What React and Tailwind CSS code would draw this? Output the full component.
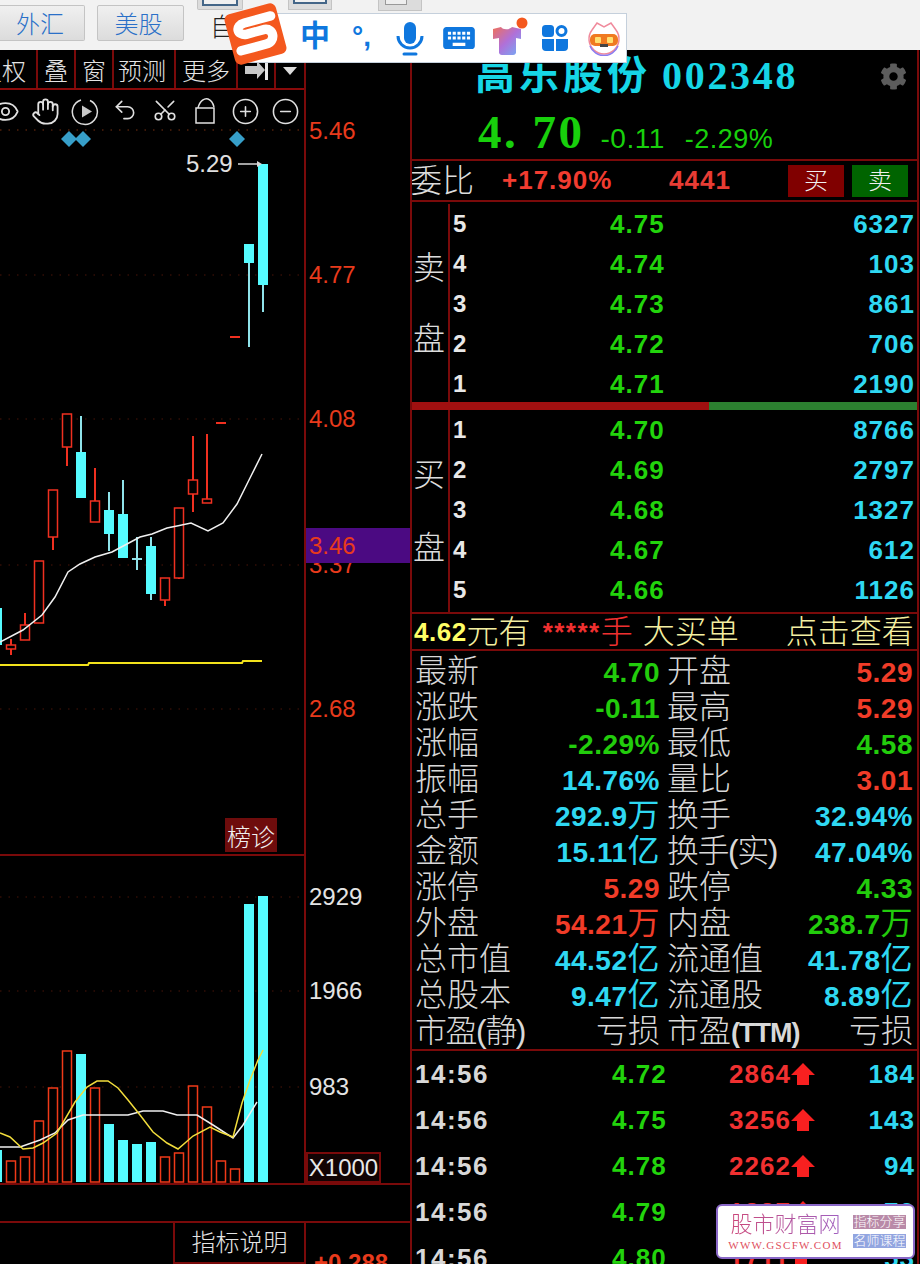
import { Eye, Hand, Undo2, Scissors, CirclePlus, CircleMinus } from 'lucide-react';
import { FaCog } from 'react-icons/fa';
import { MdKeyboard } from 'react-icons/md';

const sans = "font-['Liberation_Sans','Noto_Sans_CJK_SC',sans-serif]";

// x, bodyTop, bodyBottom, wickTop, wickBottom, up (red hollow) or down (cyan filled)
const candles = [
  [-3, 608, 645, 600, 650, false],
  [11, 645, 649, 639, 655, true],
  [25, 625, 640, 613, 640, true],
  [39, 561, 623, 561, 623, true],
  [53, 490, 537, 490, 550, true],
  [67, 414, 447, 414, 466, true],
  [81, 452, 498, 416, 498, false],
  [95, 501, 522, 468, 522, true],
  [109, 510, 534, 492, 551, false],
  [123, 514, 558, 480, 558, false],
  [137, 559, 560, 537, 570, false],
  [151, 546, 594, 537, 600, false],
  [165, 578, 600, 578, 606, true],
  [179, 508, 578, 508, 579, true],
  [193, 480, 494, 436, 512, true],
  [207, 499, 503, 434, 503, true],
  [221, 423, 424, 423, 424, true],
  [235, 337, 338, 337, 338, true],
  [249, 244, 263, 244, 347, false],
  [263, 164, 285, 164, 312, false],
];

const volumes = [
  [-3, 1150, false], [11, 1161, true], [25, 1157, true], [39, 1121, true], [53, 1088, true],
  [67, 1051, true], [81, 1054, false], [95, 1088, true], [109, 1124, false], [123, 1140, false],
  [137, 1144, false], [151, 1142, false], [165, 1157, true], [179, 1153, true], [193, 1086, true],
  [207, 1107, true], [221, 1161, true], [235, 1169, true], [249, 904, false], [263, 896, false],
];

const maLine = '0,642 23,630 42,615 55,597 68,572 80,564 95,557 112,552 127,544 140,537 152,534 167,528 177,526 191,523 208,531 223,523 237,504 250,478 262,454';
const volYellow = '0,1133 10,1137 23,1149 33,1148 43,1143 57,1133 75,1102 87,1087 97,1081 108,1081 118,1088 128,1100 140,1115 153,1132 167,1143 178,1149 193,1136 210,1127 220,1132 233,1137 242,1103 250,1080 258,1060 263,1050';
const volWhite = '0,1147 20,1147 40,1140 55,1133 68,1120 83,1115 128,1115 143,1111 163,1111 177,1115 197,1115 213,1125 233,1138 243,1125 257,1102';

function Chart() {
  return (
    <svg width="305" height="1093" viewBox="0 90 305 1093" className="block">
      {[130, 275, 419, 565, 709, 897, 991, 1087].map((y) => (
        <line key={y} x1="0" x2="305" y1={y} y2={y} stroke={y === 130 ? '#7a3010' : '#4a1508'} strokeWidth="1" strokeDasharray="1.5 7" />
      ))}
      <line x1="0" x2="305" y1="855" y2="855" stroke="#7a0a0a" strokeWidth="2" />
      {[69, 83, 237].map((x) => (
        <polygon key={x} points={`${x - 8},139 ${x},131 ${x + 8},139 ${x},147`} fill="#379fc9" />
      ))}
      {candles.map(([x, top, bottom, wickTop, wickBottom, up]) => {
        const wick = up ? '#f03020' : '#8fe3ea';
        if (bottom - top <= 1) {
          return (
            <g key={x}>
              <line x1={x - 5} x2={x + 5} y1={top} y2={top} stroke={wick} strokeWidth="2" />
              <line x1={x} x2={x} y1={wickTop} y2={wickBottom} stroke={wick} strokeWidth="2" />
            </g>
          );
        }
        return (
          <g key={x}>
            <line x1={x} x2={x} y1={wickTop} y2={wickBottom} stroke={wick} strokeWidth="2" />
            {up ? (
              <rect x={x - 4.5} y={top} width="9" height={bottom - top} fill="#000" stroke="#f03020" strokeWidth="1.5" />
            ) : (
              <rect x={x - 5} y={top} width="10" height={bottom - top} fill="#55fbff" />
            )}
          </g>
        );
      })}
      <polyline points={maLine} fill="none" stroke="#f0f0f0" strokeWidth="1.5" />
      <polyline points="0,665 88,665 89,663 242,663 243,661 262,661" fill="none" stroke="#f2e21c" strokeWidth="2" />
      <text x="186" y="172" fill="#e0e0e0" fontSize="24" fontFamily="Liberation Sans">5.29</text>
      <line x1="238" x2="258" y1="164" y2="164" stroke="#d8d8d8" strokeWidth="1.5" />
      <polygon points="257,161 262,164 257,167" fill="#d8d8d8" />
      {volumes.map(([x, top, up]) =>
        up ? (
          <rect key={x} x={x - 4.5} y={top} width="9" height={1182 - top} fill="#000" stroke="#f03a18" strokeWidth="1.5" />
        ) : (
          <rect key={x} x={x - 5} y={top} width="10" height={1182 - top} fill="#55fbff" />
        )
      )}
      <polyline points={volWhite} fill="none" stroke="#f0f0f0" strokeWidth="1.5" />
      <polyline points={volYellow} fill="none" stroke="#f2dd3c" strokeWidth="1.5" />
    </svg>
  );
}

function Tab({ width, children }) {
  return (
    <div className={`flex h-full items-center justify-center overflow-hidden whitespace-nowrap border-r-2 border-[#7a0a0a] pt-[5px] ${width}`}>
      {children}
    </div>
  );
}

function ToolIcon({ children }) {
  return <span className="flex w-10 flex-none justify-center">{children}</span>;
}

function LeftPanel() {
  const axisPrice = ['5.46', '4.77', '4.08', '3.37', '2.68'];
  return (
    <div className="flex w-[412px] flex-none flex-col border-r-2 border-[#7a0a0a]">
      <div className="flex">
        <div className="w-[306px] flex-none border-r-2 border-[#7a0a0a]">
          <div className="flex h-[40px] items-stretch border-b-2 border-[#8a0a0a] text-[24px] text-[#e4e4e4]">
            <Tab width="w-[38px] justify-end pr-[10px]">复权</Tab>
            <Tab width="w-[38px]">叠</Tab>
            <Tab width="w-[38px]">窗</Tab>
            <Tab width="w-[62px] pr-[4px]">预测</Tab>
            <Tab width="w-[62px]">更多</Tab>
            <Tab width="w-[38px]">
              <svg width="26" height="24" viewBox="0 0 26 24"><path d="M2 6h12V1l8 9-8 9v-5H2z" fill="#c8c8c8" /><rect x="22" y="2" width="3" height="18" fill="#e8e8e8" /></svg>
            </Tab>
            <div className="flex flex-1 items-center justify-center pt-[4px]">
              <svg width="16" height="10" viewBox="0 0 16 10"><path d="M1 1h14L8 9z" fill="#dcdcdc" /></svg>
            </div>
          </div>
          <div className="relative">
            <div className="absolute left-0 top-0 flex h-[42px] w-[304px] items-center overflow-hidden text-[#e0e0e0]">
              <div className="-ml-[15px] flex flex-none">
                <ToolIcon><Eye size={29} strokeWidth={1.5} /></ToolIcon>
                <ToolIcon><Hand size={29} strokeWidth={1.5} /></ToolIcon>
                <ToolIcon>
                  <svg width="29" height="29" viewBox="0 0 29 29" fill="none" stroke="#dcdcdc" strokeWidth="1.5"><path d="M19 3.5A12.5 12.5 0 1 1 10 3" /><path d="M11 8.5v12l10-6z" fill="#c8c8c8" stroke="none" /></svg>
                </ToolIcon>
                <ToolIcon><Undo2 size={26} strokeWidth={1.5} /></ToolIcon>
                <ToolIcon><Scissors size={26} strokeWidth={1.5} className="-rotate-90" /></ToolIcon>
                <ToolIcon>
                  <svg width="24" height="28" viewBox="0 0 24 28" fill="none" stroke="#e0e0e0" strokeWidth="1.5"><rect x="3" y="11" width="18" height="15" /><path d="M5 11C7 3 12 1 15 2c3 1 5 4 6 8" /></svg>
                </ToolIcon>
                <ToolIcon><CirclePlus size={29} strokeWidth={1.3} /></ToolIcon>
                <ToolIcon><CircleMinus size={29} strokeWidth={1.3} /></ToolIcon>
              </div>
            </div>
            <Chart />
            <div className="absolute left-[225px] top-[728px] flex h-[34px] w-[52px] items-end justify-center bg-[#6e0c0c] pb-[1px] text-[24px] leading-[26px] text-[#f0f0f0]">榜诊</div>
          </div>
        </div>
        <div className="relative flex-1">
          <div className="flex flex-col pl-[3px] pt-[69px] text-[24px] leading-6 text-[#e83a1c]">
            {axisPrice.map((v, i) => (
              <div key={v} className={i === 2 ? 'h-[146px]' : 'h-[144px]'}>{v}</div>
            ))}
          </div>
          <div className="absolute left-0 top-[478px] flex h-[35px] w-full items-center bg-[#4b0a82] pl-[3px] text-[24px] text-[#e83a1c]">3.46</div>
          <div className="absolute left-[3px] top-[835px] flex flex-col text-[24px] leading-6 text-[#e4e4e4]">
            <div className="h-[94px]">2929</div>
            <div className="h-[96px]">1966</div>
            <div>983</div>
          </div>
          <div className="absolute bottom-0 left-0 flex h-[31px] w-[75px] items-center justify-center border-2 border-[#7a0a0a] bg-[#120404] text-[24px] text-[#e8e8e8]">X1000</div>
        </div>
      </div>
      <div className="h-[40px] border-y-2 border-[#7a0a0a]" />
      <div className="flex h-[41px]">
        <div className="w-[173px] flex-none" />
        <div className="flex w-[133px] flex-none items-center justify-center border-x-2 border-b-2 border-[#7a0a0a] text-[24px] text-[#e4e4e4]">指标说明</div>
        <div className="flex-1 overflow-hidden pl-[8px] pt-[28px] text-[24px] font-bold leading-6 text-[#e83a1c]">+0.288</div>
      </div>
    </div>
  );
}

function OrderRows({ label, rows, box }) {
  return (
    <div className={`flex ${box}`}>
      <div className="flex w-[38px] flex-none flex-col items-center justify-around border-r-2 border-[#7a0a0a] py-[28px] pr-[2px] text-[32px] leading-none text-[#dcdcdc]">
        <span>{label[0]}</span>
        <span>{label[1]}</span>
      </div>
      <div className="flex-1 font-bold">
        {rows.map(([n, price, vol]) => (
          <div key={n} className="flex h-10 items-center text-[26px] tracking-[1px]">
            <span className="w-[42px] flex-none pl-[3px] text-[24px] text-[#e8e8e8]">{n}</span>
            <span className="w-[118px] flex-none pl-[118px] text-[#22d40c]">{price}</span>
            <span className="flex-1 pr-[2px] text-right text-[#2fd8f2]">{vol}</span>
          </div>
        ))}
      </div>
    </div>
  );
}

const stats = [
  ['最新', '4.70', '#22cc0c', '开盘', '5.29', '#f03c28'],
  ['涨跌', '-0.11', '#22cc0c', '最高', '5.29', '#f03c28'],
  ['涨幅', '-2.29%', '#22cc0c', '最低', '4.58', '#22cc0c'],
  ['振幅', '14.76%', '#2fd8f2', '量比', '3.01', '#f03c28'],
  ['总手', '292.9万', '#2fd8f2', '换手', '32.94%', '#2fd8f2'],
  ['金额', '15.11亿', '#2fd8f2', '换手(实)', '47.04%', '#2fd8f2'],
  ['涨停', '5.29', '#f03c28', '跌停', '4.33', '#22cc0c'],
  ['外盘', '54.21万', '#f03c28', '内盘', '238.7万', '#22cc0c'],
  ['总市值', '44.52亿', '#2fd8f2', '流通值', '41.78亿', '#2fd8f2'],
  ['总股本', '9.47亿', '#2fd8f2', '流通股', '8.89亿', '#2fd8f2'],
  ['市盈(静)', '亏损', '#d8d8d8', '市盈(TTM)', '亏损', '#d8d8d8'],
];

function Value({ text, color }) {
  if (text === '亏损') return <span className="text-[32px]" style={{ color }}>{text}</span>;
  const last = text[text.length - 1];
  const hasUnit = last === '万' || last === '亿';
  return (
    <span className="text-[28px] font-bold tracking-[0.5px]" style={{ color }}>
      {hasUnit ? text.slice(0, -1) : text}
      {hasUnit && <span className="text-[32px] font-normal">{last}</span>}
    </span>
  );
}

function StatLabel({ text }) {
  if (text === '市盈(TTM)') {
    return <>市盈<span className="text-[27px] font-bold tracking-[-1px]">(TTM)</span></>;
  }
  if (text.includes('(')) return <span className="tracking-[-1.5px]">{text}</span>;
  return text;
}

const ticks = [
  ['4.72', '2864', '184'],
  ['4.75', '3256', '143'],
  ['4.78', '2262', '94'],
  ['4.79', '1837', '70'],
  ['4.80', '1711', '53'],
];

function RightPanel() {
  return (
    <div className="w-[507px] flex-none overflow-hidden border-r-2 border-[#7a0a0a]">
      <div className="relative h-[111px] border-b-2 border-[#7a0a0a]">
        <div className="flex items-baseline whitespace-nowrap pl-[63px] pt-[2px] font-['Liberation_Serif','Noto_Sans_CJK_SC',serif] text-[40px] font-bold leading-[48px] text-[#16d6e6]">
          <span className="tracking-[4px]">高乐股份</span>
          <span className="ml-[11px] tracking-[2.7px]">002348</span>
        </div>
        <FaCog size={27} className="absolute right-[10px] top-[13px] text-[#5c5c5c]" />
        <div className="mt-[7px] flex items-baseline pl-[66px] text-[#18d00c]">
          <span className="font-['Liberation_Serif',serif] text-[47px] font-bold leading-[50px] tracking-[2.5px]">4. 70</span>
          <span className="ml-[16px] text-[28px] tracking-[0.5px]">-0.11</span>
          <span className="ml-[20px] text-[27px] tracking-[0.5px]">-2.29%</span>
        </div>
      </div>
      <div className="flex h-[41px] items-center border-b-2 border-[#7a0a0a]">
        <span className="-ml-[2px] w-[92px] flex-none text-[32px] leading-none text-[#dcdcdc]">委比</span>
        <span className="w-[167px] flex-none text-[26px] font-bold tracking-[1px] text-[#f23c30]">+17.90%</span>
        <span className="w-[119px] flex-none text-[26px] font-bold tracking-[1px] text-[#e83c34]">4441</span>
        <span className="flex h-[32px] w-[56px] flex-none items-center justify-center bg-[#800000] text-[24px] text-[#f0f0f0]">买</span>
        <span className="ml-[8px] flex h-[32px] w-[56px] flex-none items-center justify-center bg-[#006400] text-[24px] text-[#f0f0f0]">卖</span>
      </div>
      <OrderRows label="卖盘" box="h-[200px] pt-[2px]" rows={[['5', '4.75', '6327'], ['4', '4.74', '103'], ['3', '4.73', '861'], ['2', '4.72', '706'], ['1', '4.71', '2190']]} />
      <div className="flex h-[8px]">
        <div className="w-[297px] flex-none bg-[#a01010]" />
        <div className="flex-1 bg-[#2c8030]" />
      </div>
      <OrderRows label="买盘" box="h-[204px] border-b-2 border-[#7a0a0a]" rows={[['1', '4.70', '8766'], ['2', '4.69', '2797'], ['3', '4.68', '1327'], ['4', '4.67', '612'], ['5', '4.66', '1126']]} />
      <div className="flex h-[37px] items-center whitespace-nowrap border-b-2 border-[#7a0a0a] pl-[2px] text-[32px] leading-none text-[#f4efa0]">
        <span className="text-[26px] font-bold tracking-[0.5px] text-[#ffff66]">4.62</span>
        <span>元有</span>
        <span className="ml-[12px] text-[26px] font-bold tracking-[1.5px] text-[#f03030]">*****</span>
        <span className="text-[#f03030]">手</span>
        <span className="ml-[10px]">大买单</span>
        <span className="ml-[47px]">点击查看</span>
      </div>
      <div className="h-[400px] border-b-2 border-[#7a0a0a] pl-[3px] pt-[2px]">
        {stats.map(([a, v1, c1, b, v2, c2]) => (
          <div key={a} className="flex h-9 items-center whitespace-nowrap text-[32px] leading-none text-[#d8d8d8]">
            <span className="w-[110px] flex-none"><StatLabel text={a} /></span>
            <span className="w-[135px] flex-none text-right"><Value text={v1} color={c1} /></span>
            <span className="ml-[7px] w-[120px] flex-none"><StatLabel text={b} /></span>
            <span className="w-[126px] flex-none text-right"><Value text={v2} color={c2} /></span>
          </div>
        ))}
      </div>
      {ticks.map(([price, vol, count]) => (
        <div key={price} className="flex h-[46px] items-center whitespace-nowrap text-[26px] font-bold tracking-[1px]">
          <span className="w-[90px] flex-none pl-[3px] tracking-[1.5px] text-[#d8d8d8]">14:56</span>
          <span className="w-[165px] flex-none pl-[110px] text-[#22d40c]">{price}</span>
          <span className="flex w-[155px] flex-none items-center pl-[62px] text-[#f03030]">
            {vol}
            <svg width="26" height="24" viewBox="0 0 26 24" className="-ml-[1px]"><path d="M13 1l12 12h-6v10H7V13H1z" fill="#f82020" /></svg>
          </span>
          <span className="flex-1 pr-[2px] text-right text-[#2fd8f2]">{count}</span>
        </div>
      ))}
    </div>
  );
}

function SogouBar() {
  return (
    <div className="absolute left-[240px] top-[13px] h-[50px] w-[387px] border border-[#c5d0dc] bg-white">
      <span className="absolute left-[59px] top-[7px] text-[30px] font-bold leading-none text-[#0f77de]">中</span>
      <span className="absolute left-[111px] top-[9px] text-[28px] font-bold leading-none text-[#0f77de]">°,</span>
      <svg width="30" height="36" viewBox="0 0 30 36" className="absolute left-[154px] top-[7px]" fill="none">
        <rect x="9" y="1" width="12" height="22" rx="6" fill="#0f77de" />
        <path d="M3 15a12 12 0 0 0 24 0" stroke="#0f77de" strokeWidth="3" />
        <path d="M9 33h12" stroke="#0f77de" strokeWidth="3" strokeLinecap="round" />
      </svg>
      <MdKeyboard size={38} className="absolute left-[199px] top-[5px] text-[#0f77de]" />
      <svg width="42" height="42" viewBox="0 0 42 42" className="absolute left-[249px] top-[3px]">
        <defs>
          <linearGradient id="shirt" x1="0" y1="0" x2="1" y2="1">
            <stop offset="0" stopColor="#f0705a" />
            <stop offset="0.5" stopColor="#b070d8" />
            <stop offset="1" stopColor="#70b0f8" />
          </linearGradient>
        </defs>
        <path d="M3 12l8-2c2 3 8 3 11 0l9 2v10l-5-1v15a3 3 0 0 1-3 2H12a3 3 0 0 1-3-2V21l-6 1z" fill="url(#shirt)" />
        <circle cx="32" cy="6" r="5.5" fill="#f4581e" />
      </svg>
      <svg width="30" height="30" viewBox="0 0 30 30" className="absolute left-[299px] top-[9px]">
        <rect x="2" y="2" width="12" height="12" rx="3.5" fill="#0f77de" />
        <circle cx="21.5" cy="8" r="4.5" fill="#fff" stroke="#0f77de" strokeWidth="3" />
        <path d="M2 16h12v12h-8a4 4 0 0 1-4-4zM16 16h12v8a4 4 0 0 1-4 4h-8z" fill="#0f77de" />
      </svg>
      <svg width="34" height="36" viewBox="0 0 34 36" className="absolute left-[346px] top-[6px]">
        <path d="M5 10L10 3l7 4 7-4 5 7a15 15 0 1 1-24 0z" fill="#fff" stroke="#f08a9c" strokeWidth="1.5" />
        <path d="M3 26a15 15 0 0 0 28 0" fill="none" stroke="#8a7cf0" strokeWidth="1.5" />
        <rect x="3" y="14" width="28" height="12" rx="5" fill="#f07a20" />
        <rect x="8" y="17" width="6" height="6" rx="1" fill="#ffe070" />
        <rect x="20" y="17" width="6" height="6" rx="1" fill="#ffe070" />
        <rect x="13" y="24" width="8" height="3" fill="#444" />
      </svg>
    </div>
  );
}

function SogouLogo() {
  return (
    <div className="absolute left-[229px] top-[8px] flex h-[52px] w-[53px] -rotate-[15deg] items-center justify-center rounded-[6px] bg-[#f4581e]">
      <svg width="48" height="44" viewBox="0 0 46 42" fill="none">
        <path d="M41 8H15C5 8 5 18 14 19h18c9 1 8 14-2 14H5" stroke="#fff" strokeWidth="9" strokeLinecap="round" />
      </svg>
    </div>
  );
}

function TopBar() {
  const btn = 'flex h-[36px] items-center justify-center border border-[#c4c4c4] bg-gradient-to-b from-[#f0f0f0] to-[#dcdcdc] pr-[4px] pt-[3px] text-[24px] text-[#2a70c8]';
  return (
    <div className="relative flex h-[50px] bg-[#f2f2f2] pt-[5px]">
      <div className={`${btn} w-[85px] rounded-r-[2px] border-l-0`}>外汇</div>
      <div className={`${btn} ml-[12px] w-[87px] rounded-[2px]`}>美股</div>
      <div className="ml-[26px] pt-[8px] text-[25px] leading-7 text-[#222]">自</div>
      <div className="absolute left-[197px] top-0 h-[10px] w-[46px] rounded-b-[2px] border border-t-0 border-[#c4c4c4] bg-[#dcdcdc] px-[4px]">
        <div className="h-[6px] border-x-2 border-b-2 border-[#446688] bg-[#f0f0f0]" />
      </div>
      <div className="absolute left-[288px] top-0 h-[10px] w-[44px] border border-t-0 border-[#c4c4c4] bg-[#dcdcdc] px-[4px]">
        <div className="h-[4px] border-x-2 border-b-2 border-[#446688] bg-[#f0f0f0]" />
      </div>
      <div className="absolute left-[378px] top-0 h-[11px] w-[44px] border border-t-0 border-[#c4c4c4] bg-[#dcdcdc] px-[6px]">
        <div className="h-[5px] w-[22px] border-x border-b border-[#999] bg-[#eee]" />
      </div>
    </div>
  );
}

function Watermark() {
  return (
    <div className="absolute left-[716px] top-[1204px] flex h-[55px] w-[199px] items-center rounded-[6px] border-2 border-[#8a68c8] bg-white">
      <div className="w-[135px] flex-none text-center">
        <div className="bg-gradient-to-r from-[#d04070] to-[#9a60c8] bg-clip-text text-[22px] font-light leading-[26px] text-transparent">股市财富网</div>
        <div className="font-['Liberation_Serif',serif] text-[11px] leading-[14px] tracking-[1.3px] text-[#e05060]">WWW.GSCFW.COM</div>
      </div>
      <div className="flex flex-col gap-[5px]">
        <span className="flex h-[14px] w-[53px] items-center justify-center bg-[#b98aa8] text-[13px] text-white">指标分享</span>
        <span className="flex h-[14px] w-[53px] items-center justify-center bg-[#92a5e0] text-[13px] text-white">名师课程</span>
      </div>
    </div>
  );
}

export default function App() {
  return (
    <div className={`relative h-[1264px] w-[920px] overflow-hidden bg-black font-light ${sans}`}>
      <TopBar />
      <div className="flex">
        <LeftPanel />
        <RightPanel />
      </div>
      <SogouBar />
      <SogouLogo />
      <Watermark />
    </div>
  );
}
